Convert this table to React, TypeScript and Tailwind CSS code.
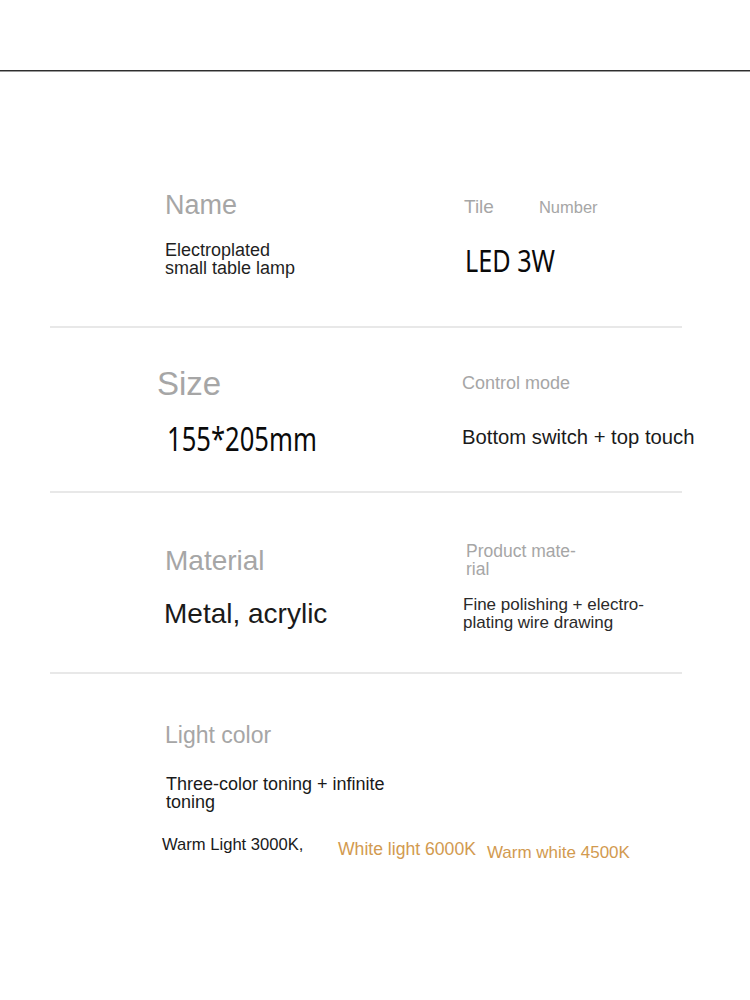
import React from "react";

const sans = "font-['Liberation_Sans',Arial,sans-serif]";
const cond = "font-['Noto_Sans',sans-serif]";

export default function App() {
  return (
    <div className={`w-[750px] h-[1000px] bg-white overflow-hidden ${sans}`}>
      <div className="h-[70px]" />
      <div className="h-[1px] bg-[#2e2e2e]" />
      <div className="h-[1px] bg-[#9a9a9a]" />

      {/* Section 1 */}
      <div className="h-[254px] flex">
        <div className="w-[464px] pl-[165px]">
          <div className="mt-[120px] text-[27px] leading-none text-[#a6a6a6]">Name</div>
          <div className="mt-[22px] text-[18px] leading-[18px] text-[#1f1f1f]">
            Electroplated
            <br />
            small table lamp
          </div>
        </div>
        <div className="flex-1">
          <div className="mt-[125px] flex items-start">
            <span className="text-[19px] leading-none text-[#a6a6a6]">Tile</span>
            <span className="ml-[45px] mt-[1.5px] text-[16.5px] leading-none text-[#a6a6a6]">Number</span>
          </div>
          <div className="mt-[30px] ml-[1px]">
            <span className={`inline-block origin-left scale-x-[0.84] ${cond} text-[30px] leading-none text-[#0a0a0a]`}>LED 3W</span>
          </div>
        </div>
      </div>
      <div className="ml-[50px] w-[632px] h-[2px] bg-[#e8e8e8]" />

      {/* Section 2 */}
      <div className="h-[163px] flex">
        <div className="w-[462px] pl-[157px]">
          <div className="mt-[39px] text-[33px] leading-none text-[#a6a6a6]">Size</div>
          <div className="mt-[23px] ml-[10px]">
            <span className={`inline-block origin-left scale-x-[0.8] ${cond} text-[32px] leading-none text-[#0a0a0a]`}>155*205mm</span>
          </div>
        </div>
        <div className="flex-1">
          <div className="mt-[46px] text-[18px] leading-none text-[#a6a6a6]">Control mode</div>
          <div className="mt-[35px] text-[20.25px] leading-none text-[#1a1a1a] whitespace-nowrap">Bottom switch + top touch</div>
        </div>
      </div>
      <div className="ml-[50px] w-[632px] h-[2px] bg-[#e8e8e8]" />

      {/* Section 3 */}
      <div className="h-[179px] flex">
        <div className="w-[463px] pl-[165px]">
          <div className="mt-[54px] text-[28px] leading-none text-[#a6a6a6]">Material</div>
          <div className="mt-[25px] -ml-[1px] text-[28px] leading-none text-[#1a1a1a]">Metal, acrylic</div>
        </div>
        <div className="flex-1">
          <div className="mt-[49px] ml-[3px] text-[17.5px] leading-[18px] text-[#a6a6a6]">
            Product mate-
            <br />
            rial
          </div>
          <div className="mt-[18px] text-[17px] leading-[18px] text-[#2a2a2a]">
            Fine polishing + electro-
            <br />
            plating wire drawing
          </div>
        </div>
      </div>
      <div className="ml-[50px] w-[632px] h-[2px] bg-[#e8e8e8]" />

      {/* Section 4 */}
      <div className="pl-[162px]">
        <div className="mt-[50px] ml-[3px] text-[23px] leading-none text-[#a6a6a6]">Light color</div>
        <div className="mt-[28px] ml-[4px] text-[18px] leading-[18px] text-[#1a1a1a]">
          Three-color toning + infinite
          <br />
          toning
        </div>
        <div className="mt-[26px] flex items-start whitespace-nowrap">
          <span className="w-[176px] text-[16.6px] leading-none text-[#1a1a1a]">Warm Light 3000K,</span>
          <span className="mt-[4px] text-[17.6px] leading-none text-[#d29a4f]">White light 6000K</span>
          <span className="ml-[11px] mt-[7px] text-[17px] leading-none text-[#d29a4f]">Warm white 4500K</span>
        </div>
      </div>
    </div>
  );
}
